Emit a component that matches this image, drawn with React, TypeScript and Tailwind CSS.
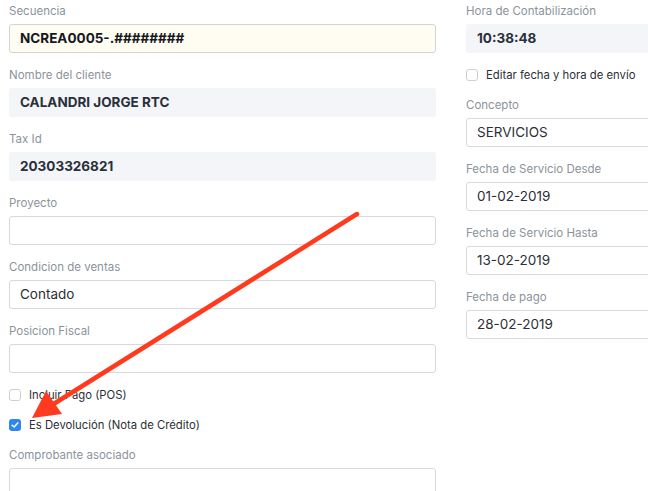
import type { ReactNode } from 'react';

type FieldProps = {
  label: string;
  value?: string;
  variant?: 'input' | 'readonly' | 'highlight';
  bold?: boolean;
};

function Field({ label, value = '', variant = 'input', bold = false }: FieldProps) {
  const box =
    variant === 'readonly'
      ? 'bg-[#f4f5f9] border-transparent'
      : variant === 'highlight'
        ? 'bg-[#fffcf2] border-[#d4d4d4]'
        : 'bg-white border-[#d9d9d9]';
  return (
    <div className="mb-[14px]">
      <div className="h-[14px] pt-[1px] text-[11.5px] leading-[14px] text-[#8c939b]">{label}</div>
      <div
        className={`mt-[7px] h-[29px] rounded-[3px] border px-[10px] flex items-center text-[13.5px] ${box} ${
          bold ? 'font-bold text-[#2a303a]' : 'text-[#2b2f36]'
        } ${variant === 'highlight' ? 'text-[#15181d]' : ''}`}
      >
        {value}
      </div>
    </div>
  );
}

function Check({ checked = false, children }: { checked?: boolean; children: ReactNode }) {
  return (
    <div className="h-[14px] flex items-center gap-[8px] text-[#2b2f36] text-[11.3px]">
      {checked ? (
        <span className="w-[12px] h-[12px] rounded-[3px] bg-[#2f86eb] flex items-center justify-center">
          <svg width="8" height="8" viewBox="0 0 8 8" fill="none">
            <path d="M1.2 4.2 L3.1 6 L6.8 1.9" stroke="white" strokeWidth="1.5" strokeLinecap="round" strokeLinejoin="round" />
          </svg>
        </span>
      ) : (
        <span className="w-[12px] h-[12px] rounded-[3px] border border-[#cfcfcf] bg-white" />
      )}
      <span>{children}</span>
    </div>
  );
}

export default function App() {
  return (
    <div
      className="relative w-[648px] h-[491px] overflow-hidden bg-white"
      style={{ fontFamily: 'Inter, "Noto Sans", sans-serif' }}
    >
      <div className="flex gap-[30px] pl-[9px] pt-[3px]">
        <div className="w-[427px] shrink-0">
          <Field label="Secuencia" value="NCREA0005-.########" variant="highlight" bold />
          <Field label="Nombre del cliente" value="CALANDRI JORGE RTC" variant="readonly" bold />
          <Field label="Tax Id" value="20303326821" variant="readonly" bold />
          <Field label="Proyecto" />
          <Field label="Condicion de ventas" value="Contado" />
          <Field label="Posicion Fiscal" />
          <div className="h-[1px]" />
          <Check>Incluir Pago (POS)</Check>
          <div className="h-[16px]" />
          <Check checked>Es Devolución (Nota de Crédito)</Check>
          <div className="h-[15px]" />
          <Field label="Comprobante asociado" />
        </div>
        <div className="w-[427px] shrink-0">
          <Field label="Hora de Contabilización" value="10:38:48" variant="readonly" bold />
          <div className="h-[1px]" />
          <Check>Editar fecha y hora de envío</Check>
          <div className="h-[15px]" />
          <Field label="Concepto" value="SERVICIOS" />
          <Field label="Fecha de Servicio Desde" value="01-02-2019" />
          <Field label="Fecha de Servicio Hasta" value="13-02-2019" />
          <Field label="Fecha de pago" value="28-02-2019" />
        </div>
      </div>

      <svg className="absolute inset-0 pointer-events-none" width="648" height="491" viewBox="0 0 648 491">
        <line x1="357" y1="214" x2="52" y2="405" stroke="#ff3a1e" strokeWidth="4.5" strokeLinecap="round" />
        <polygon points="32,418 46,391 62,414" fill="#ff3a1e" />
      </svg>
    </div>
  );
}
